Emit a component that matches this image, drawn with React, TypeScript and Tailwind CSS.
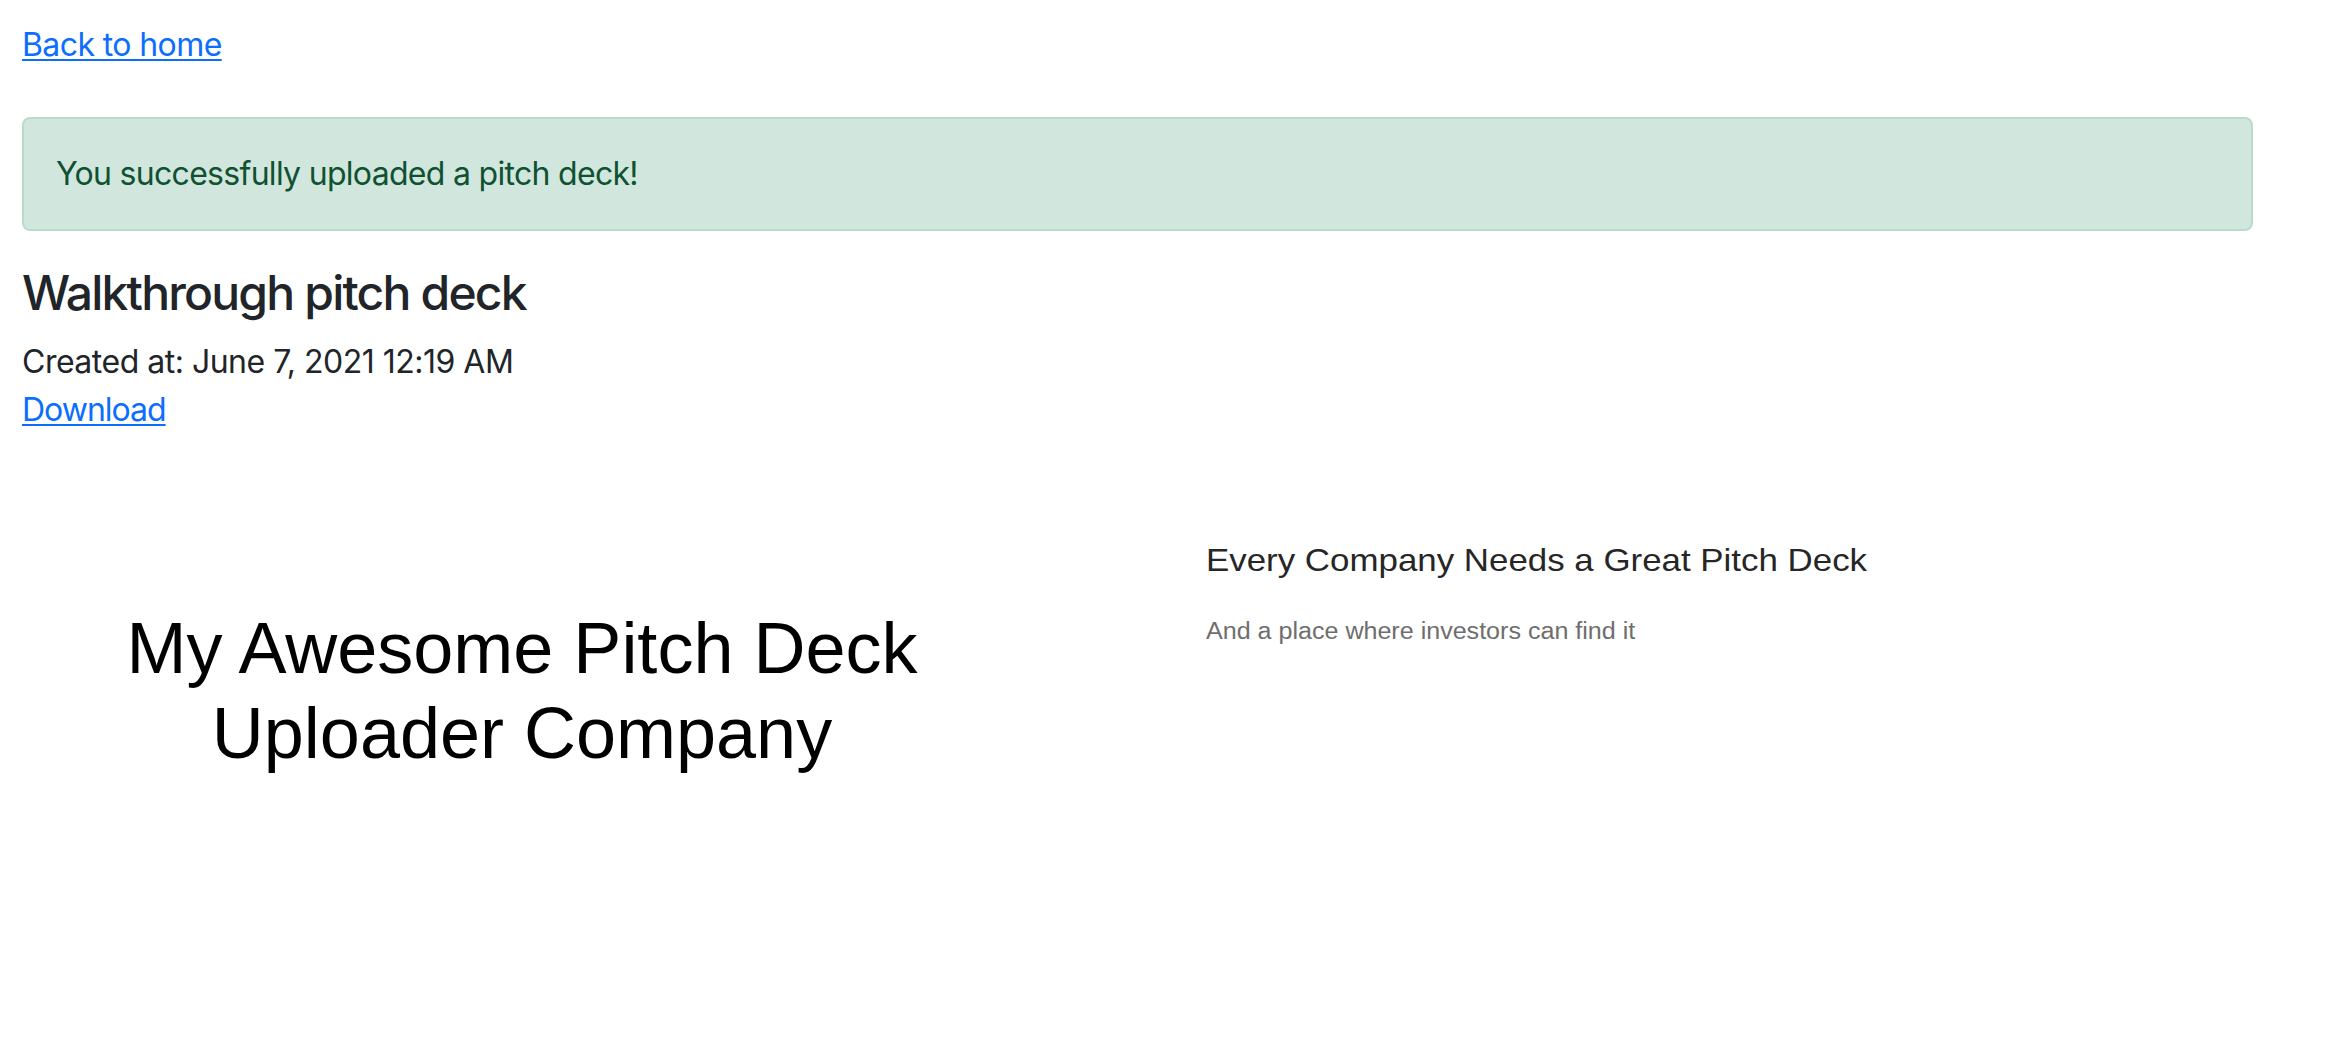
export default function App() {
  return (
    <div
      className="min-h-[1058px] bg-white pt-[21px] pl-[22px] text-[#212529]"
      style={{ fontFamily: "Inter, 'Noto Sans', 'Liberation Sans', sans-serif" }}
    >
      <div className="w-[2231px]">
        <a href="#" className="block w-fit text-[32px] leading-[48px] tracking-[-0.6px] text-[#0d6efd] underline decoration-2 underline-offset-[3px]">
          Back to home
        </a>

        <div className="mt-[48px] rounded-[8px] border-2 border-[#badbcc] bg-[#d1e7dd] px-[32px] py-[31px] text-[32px] leading-[48px] tracking-[-0.7px] text-[#0f5132]">
          You successfully uploaded a pitch deck!
        </div>

        <h4 className="mt-[33px] mb-[16px] text-[48px] font-medium leading-[1.2] tracking-[-1.8px]">Walkthrough pitch deck</h4>
        <div className="text-[32px] leading-[48px] tracking-[-0.5px]">Created at: June 7, 2021 12:19 AM</div>
        <a href="#" className="block w-fit text-[32px] leading-[48px] tracking-[-1px] text-[#0d6efd] underline decoration-2 underline-offset-[3px]">
          Download
        </a>

        <div
          className="mt-[40px] grid grid-cols-2 gap-[48px]"
          style={{ fontFamily: "'Liberation Sans', Arial, sans-serif" }}
        >
          <div className="h-[562px] w-[1000px] bg-white pt-[132px] text-center text-[72px] leading-[85px] text-black">
            <div>My Awesome Pitch Deck</div>
            <div>Uploader Company</div>
          </div>
          <div className="h-[562px] w-[1000px] bg-white pt-[67px] pl-[44px]">
            <div className="origin-left scale-x-[1.09] whitespace-nowrap text-[32px] leading-[1.2] text-[#262626]">
              Every Company Needs a Great Pitch Deck
            </div>
            <div className="mt-[39px] origin-left scale-x-[1.09] whitespace-nowrap text-[23px] leading-[1.2] text-[#6e6e6e]">
              And a place where investors can find it
            </div>
          </div>
        </div>
      </div>
    </div>
  );
}
